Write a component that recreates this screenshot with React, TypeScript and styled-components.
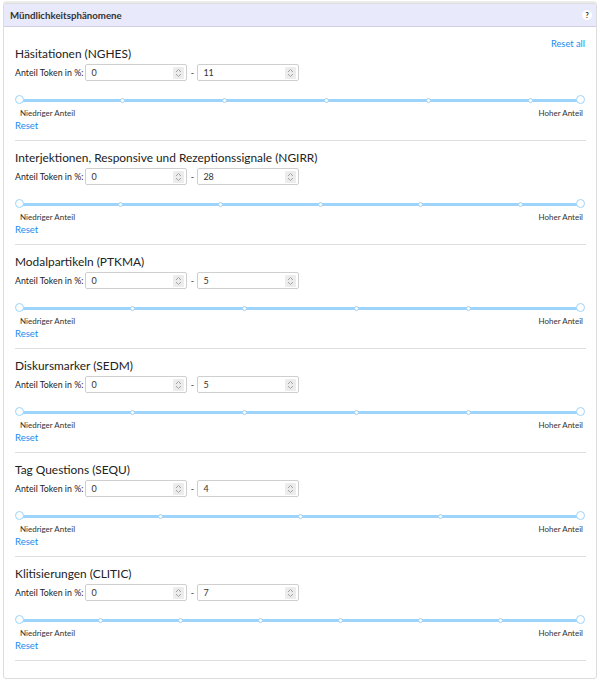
import React from "react";
import styled, { createGlobalStyle } from "styled-components";

const GlobalStyle = createGlobalStyle`
  html, body {
    margin: 0;
    padding: 0;
    background: #ffffff;
  }
  body {
    font-family: Lato, "Noto Sans", Arial, sans-serif;
    color: #222;
  }
`;

const Panel = styled.div`
  margin: 3px 3px 0 3px;
  border: 1px solid #dcdcdc;
  border-radius: 3px;
  box-shadow: 0 -2px 0 #ececec;
  background: #fff;
  height: 676px;
  box-sizing: border-box;
  overflow: hidden;
`;

const PanelHeader = styled.div`
  display: flex;
  align-items: center;
  justify-content: space-between;
  height: 22px;
  padding: 0 4px 0 6px;
  background: #e9e9fc;
  border-bottom: 1px solid #cfcfe3;
`;

const PanelTitle = styled.span`
  font-size: 9.7px;
  font-weight: 700;
  color: #333;
`;

const HelpBadge = styled.span`
  display: flex;
  align-items: center;
  justify-content: center;
  width: 10px;
  height: 10px;
  border-radius: 50%;
  background: #fff;
  font-size: 7px;
  font-weight: 700;
  color: #222;
`;

const PanelBody = styled.div`
  padding: 10px 10px 0 11px;
`;

const Section = styled.div`
  padding: 9px 0 8px 0;
  border-bottom: 1px solid #dedede;
`;

const TitleRow = styled.div`
  display: flex;
  justify-content: space-between;
  align-items: flex-start;
`;

const SectionTitle = styled.div`
  font-size: 11.9px;
  line-height: 16px;
  color: #222;
`;

const LinkText = styled.span<{ $size?: number }>`
  font-size: ${({ $size }) => $size ?? 9.5}px;
  line-height: 12px;
  color: #1a8cf0;
  cursor: pointer;
`;

const ResetAll = styled(LinkText)`
  margin-top: -8px;
  margin-right: 1px;
`;

const RangeRow = styled.div`
  display: flex;
  align-items: center;
  margin-top: 2px;
  height: 17px;
`;

const RangeLabel = styled.span`
  font-size: 8.8px;
  color: #222;
  margin-right: 2px;
  white-space: nowrap;
`;

const NumberBox = styled.div`
  display: flex;
  align-items: center;
  justify-content: space-between;
  width: 102px;
  height: 17px;
  box-sizing: border-box;
  border: 1px solid #cfcfcf;
  border-radius: 2px;
  background: #fff;
  padding: 0 2px 0 5px;
  font-size: 9px;
  color: #333;
`;

const Spinner = styled.span`
  display: flex;
  align-items: center;
  justify-content: center;
  width: 11px;
  height: 12px;
  background: #ececec;
  border-radius: 1px;
`;

const Dash = styled.span`
  width: 10px;
  text-align: center;
  font-size: 9px;
  color: #333;
`;

const SliderWrap = styled.div`
  margin-top: 14px;
  height: 10px;
  padding: 0 5px;
  display: flex;
  align-items: center;
`;

const Track = styled.div`
  position: relative;
  flex: 1;
  height: 3px;
  background: #9dd4fb;
`;

const Tick = styled.span`
  position: absolute;
  top: 50%;
  width: 3px;
  height: 3px;
  margin: -2.5px 0 0 -2.5px;
  border-radius: 50%;
  border: 1px solid #9dd4fb;
  background: #fff;
`;

const Handle = styled.span`
  position: absolute;
  top: 50%;
  width: 7px;
  height: 7px;
  margin: -5px 0 0 -5px;
  border-radius: 50%;
  border: 1.5px solid #9dd4fb;
  background: #fff;
`;

const EndLabels = styled.div`
  display: flex;
  justify-content: space-between;
  margin-top: 3px;
  padding: 0 3px 0 5px;
  font-size: 8px;
  line-height: 10px;
  color: #333;
`;

const ResetRow = styled.div`
  margin-top: 2px;
  height: 12px;
  display: flex;
`;

type Phenomenon = {
  title: string;
  max: number;
  step: number;
};

const phenomena: Phenomenon[] = [
  { title: "Häsitationen (NGHES)", max: 11, step: 2 },
  { title: "Interjektionen, Responsive und Rezeptionssignale (NGIRR)", max: 28, step: 5 },
  { title: "Modalpartikeln (PTKMA)", max: 5, step: 1 },
  { title: "Diskursmarker (SEDM)", max: 5, step: 1 },
  { title: "Tag Questions (SEQU)", max: 4, step: 1 },
  { title: "Klitisierungen (CLITIC)", max: 7, step: 1 },
];

function SpinIcon() {
  return (
    <svg width="7" height="10" viewBox="0 0 7 10">
      <path d="M1 4 L3.5 1.5 L6 4" fill="none" stroke="#999" strokeWidth="0.9" />
      <path d="M1 6 L3.5 8.5 L6 6" fill="none" stroke="#999" strokeWidth="0.9" />
    </svg>
  );
}

function Slider({ max, step }: { max: number; step: number }) {
  const ticks: number[] = [];
  for (let v = step; v < max; v += step) ticks.push(v);
  return (
    <SliderWrap>
      <Track>
        {ticks.map((t) => (
          <Tick key={t} style={{ left: `${(t / max) * 100}%` }} />
        ))}
        <Handle style={{ left: "0%" }} />
        <Handle style={{ left: "100%" }} />
      </Track>
    </SliderWrap>
  );
}

function PhenomenonFilter({ item, first }: { item: Phenomenon; first: boolean }) {
  return (
    <Section>
      <TitleRow>
        <SectionTitle>{item.title}</SectionTitle>
        {first && <ResetAll $size={9.3}>Reset all</ResetAll>}
      </TitleRow>
      <RangeRow>
        <RangeLabel>Anteil Token in %:</RangeLabel>
        <NumberBox>
          <span>0</span>
          <Spinner>
            <SpinIcon />
          </Spinner>
        </NumberBox>
        <Dash>-</Dash>
        <NumberBox>
          <span>{item.max}</span>
          <Spinner>
            <SpinIcon />
          </Spinner>
        </NumberBox>
      </RangeRow>
      <Slider max={item.max} step={item.step} />
      <EndLabels>
        <span>Niedriger Anteil</span>
        <span>Hoher Anteil</span>
      </EndLabels>
      <ResetRow>
        <LinkText>Reset</LinkText>
      </ResetRow>
    </Section>
  );
}

export default function App() {
  return (
    <>
      <GlobalStyle />
      <Panel>
        <PanelHeader>
          <PanelTitle>Mündlichkeitsphänomene</PanelTitle>
          <HelpBadge>?</HelpBadge>
        </PanelHeader>
        <PanelBody>
          {phenomena.map((p, i) => (
            <PhenomenonFilter key={p.title} item={p} first={i === 0} />
          ))}
        </PanelBody>
      </Panel>
    </>
  );
}
